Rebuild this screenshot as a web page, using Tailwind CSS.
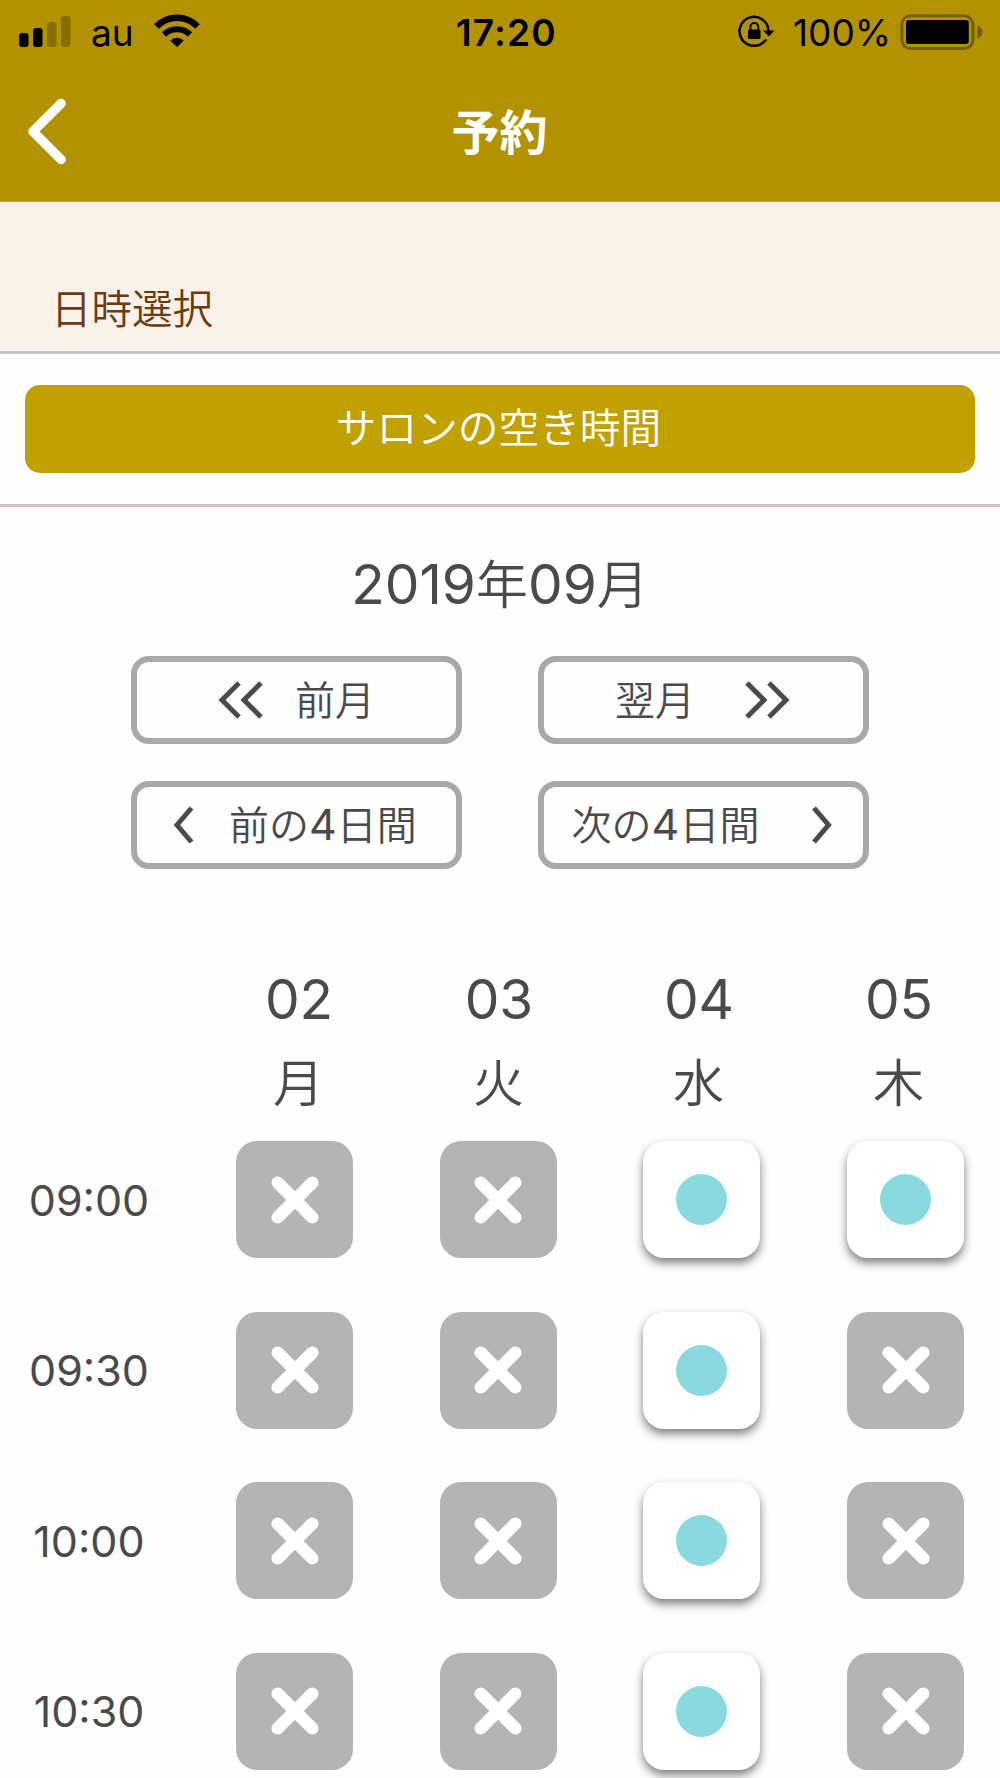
<!DOCTYPE html>
<html lang="ja">
<head>
  <meta charset="UTF-8" />
  <title>予約</title>
  <script src="https://cdn.jsdelivr.net/npm/@tailwindcss/browser@4"></script>
</head>
<body class="w-[1000px] h-[1778px] overflow-hidden bg-[#fefefe] text-[#4a4a4a] font-['Inter','Noto_Sans_CJK_JP',sans-serif]">
  <header class="h-[202px] bg-[#b29200] border-b border-[#b0a58c]">
    <!-- status bar -->
    <div class="h-16 flex items-center justify-between text-black text-[37px] leading-[64px]">
      <div class="w-[400px] flex items-center pl-[18px]">
        <svg class="w-[54px] h-[64px]" viewBox="0 0 54 64">
          <rect x="1" y="33" width="9.500" height="14" rx="3" />
          <rect x="15" y="28" width="9.500" height="19" rx="3" />
          <rect x="29" y="22" width="9.500" height="25" rx="3" opacity=".25" />
          <rect x="43" y="16" width="9.500" height="31" rx="3" opacity=".25" />
        </svg>
        <span class="ml-[19px] w-[42px] pt-px">au</span>
        <svg class="ml-[21px] w-[46px] h-[64px]" viewBox="0 0 46 64">
          <path d="M2.500 26.500a28.500 28.500 0 0 1 41 0" fill="none" stroke="#000" stroke-width="6.500" />
          <path d="M10 34.500a18.500 18.500 0 0 1 26 0" fill="none" stroke="#000" stroke-width="6" />
          <path d="M23 47l-6.700-6.500a9.500 9.500 0 0 1 13.400 0z" />
        </svg>
      </div>
      <span class="pl-[13px] pt-px font-semibold tracking-[1.200px]">17:20</span>
      <div class="w-[400px] flex items-center justify-end pr-[16px]">
        <svg class="w-[38px] h-[64px]" viewBox="0 0 38 64">
          <path d="M31.500 31A14.500 14.500 0 1 0 28.500 40.200" fill="none" stroke="#000" stroke-width="2.500" stroke-linecap="round" />
          <path d="M26 30.500h11.500l-5.700 6z" />
          <rect x="11" y="29.500" width="12.500" height="9.500" rx="1.500" />
          <path d="M13.300 30v-3a4 4 0 0 1 8 0v3" fill="none" stroke="#000" stroke-width="2" />
        </svg>
        <span class="ml-[18px] w-[107px] pt-px whitespace-nowrap">100%</span>
        <svg class="w-[84px] h-[64px]" viewBox="0 0 84 64">
          <rect x="1.800" y="15.800" width="71.200" height="32.800" rx="9" fill="none" stroke="#000" stroke-opacity=".35" stroke-width="3" />
          <rect x="6" y="20" width="62.800" height="24" rx="3" />
          <path d="M77.500 25.500c6.500 3 6.500 10.500 0 13z" opacity=".4" />
        </svg>
      </div>
    </div>
    <div class="h-[135px] flex items-center px-[28px]">
      <svg class="w-[40px] h-[68px]" viewBox="0 0 40 68" fill="none" stroke="#fff" stroke-width="9.500" stroke-linecap="round" stroke-linejoin="round">
        <path d="M33 5.500L5 33.500l28 28" />
      </svg>
      <h1 class="flex-1 pt-[2px] pr-[41px] text-center text-white text-[48px] font-bold leading-none">予約</h1>
    </div>
  </header>

  <div class="h-[152px] pt-[78px] pl-[51px] bg-[#faf2e8] border-b-3 border-[#c8c2c5]">
    <h2 class="text-[40.500px] font-[350] leading-[60px] text-[#6b3a10]">日時選択</h2>
  </div>

  <div class="h-[153px] px-[25px] pt-[31px] border-b-3 border-[#c8c2c5]">
    <div class="h-[88px] pr-[3px] rounded-[15px] bg-[#c1a100] text-white text-[40.700px] font-[350] leading-[88px] text-center">サロンの空き時間</div>
  </div>

  <div class="mt-[37px] h-[80px] flex justify-center text-[55px] leading-[80px]">
    2019<span class="pt-[2px] text-[52px] font-[350]">年</span>09<span class="pt-[2px] text-[52px] font-[350]">月</span>
  </div>

  <div class="mt-[32px] pl-[131px] grid grid-cols-[331px_331px] gap-x-[76px] gap-y-[37px] text-[40px] font-[350] leading-[76px]">
    <button class="h-[88px] flex items-center pl-[81px] border-6 border-[#a8a8a8] rounded-[18px]">
      <svg class="w-[45px] h-[38px]" viewBox="0 0 45 38" fill="none" stroke="#4a4a4a" stroke-width="5">
        <path d="M21 2L4 19l17 17M43 2L26 19l17 17" />
      </svg>
      <span class="ml-[32px] pt-px">前月</span>
    </button>
    <button class="h-[88px] flex items-center pl-[71px] border-6 border-[#a8a8a8] rounded-[18px]">
      <span class="w-[78px] pt-px whitespace-nowrap">翌月</span>
      <svg class="ml-[52px] w-[45px] h-[38px]" viewBox="0 0 45 38" fill="none" stroke="#4a4a4a" stroke-width="5">
        <path d="M2 2l17 17L2 36M24 2l17 17-17 17" />
      </svg>
    </button>
    <button class="h-[88px] flex items-center pl-[35px] border-6 border-[#a8a8a8] rounded-[18px]">
      <svg class="w-[23px] h-[38px]" viewBox="0 0 23 38" fill="none" stroke="#4a4a4a" stroke-width="5">
        <path d="M19.500 2L5 19l14.500 17" />
      </svg>
      <span class="ml-[34px] whitespace-nowrap">前の<span class="text-[43px] font-normal">4</span>日間</span>
    </button>
    <button class="h-[88px] flex items-center pl-[26px] border-6 border-[#a8a8a8] rounded-[18px]">
      <span class="w-[191px] whitespace-nowrap">次の<span class="text-[43px] font-normal">4</span>日間</span>
      <svg class="ml-[51px] w-[23px] h-[38px]" viewBox="0 0 23 38" fill="none" stroke="#4a4a4a" stroke-width="5">
        <path d="M2 2l14.500 17L2 36" />
      </svg>
    </button>
  </div>

  <div id="days" class="mt-[90px] pl-[199px] grid grid-cols-[200px_200px_200px_200px] text-center"></div>
  <div id="slots" class="mt-[14px] flex flex-col gap-[53px]"></div>

  <script>
    const days = [['02', '月'], ['03', '火'], ['04', '水'], ['05', '木']];
    // o = open, x = unavailable
    const slots = [['09:00', 'xxoo'], ['09:30', 'xxox'], ['10:00', 'xxox'], ['10:30', 'xxox']];

    document.getElementById('days').innerHTML = days.map(([d, w]) => `
      <div>
        <div class="h-[80px] text-[55px] leading-[80px]">${d}</div>
        <div class="h-[88px] pr-px text-[51px] font-[350] leading-[90px]">${w}</div>
      </div>`).join('');

    const closed = `
      <div class="size-[117px] rounded-[21px] bg-[#b4b4b4] flex items-center justify-center">
        <svg class="size-[48px]" viewBox="0 0 48 48" stroke="#fff" stroke-width="12.500" stroke-linecap="round">
          <path d="M6.700 6.700l34.600 34.600M41.300 6.700L6.700 41.300" />
        </svg>
      </div>`;
    const open = `
      <div class="size-[117px] rounded-[21px] bg-white shadow-[0_5px_10px_rgba(0,0,0,0.5)] flex items-center justify-center">
        <div class="size-[51px] rounded-full bg-[#89d9df]"></div>
      </div>`;

    document.getElementById('slots').innerHTML = slots.map(([time, cells]) => `
      <div class="h-[117.500px] flex items-center">
        <div class="w-[178px] mr-[58px] text-center text-[43px] leading-[60px]">${time}</div>
        <div class="flex gap-[86.700px]">${[...cells].map(c => c === 'o' ? open : closed).join('')}</div>
      </div>`).join('');
  </script>
</body>
</html>
